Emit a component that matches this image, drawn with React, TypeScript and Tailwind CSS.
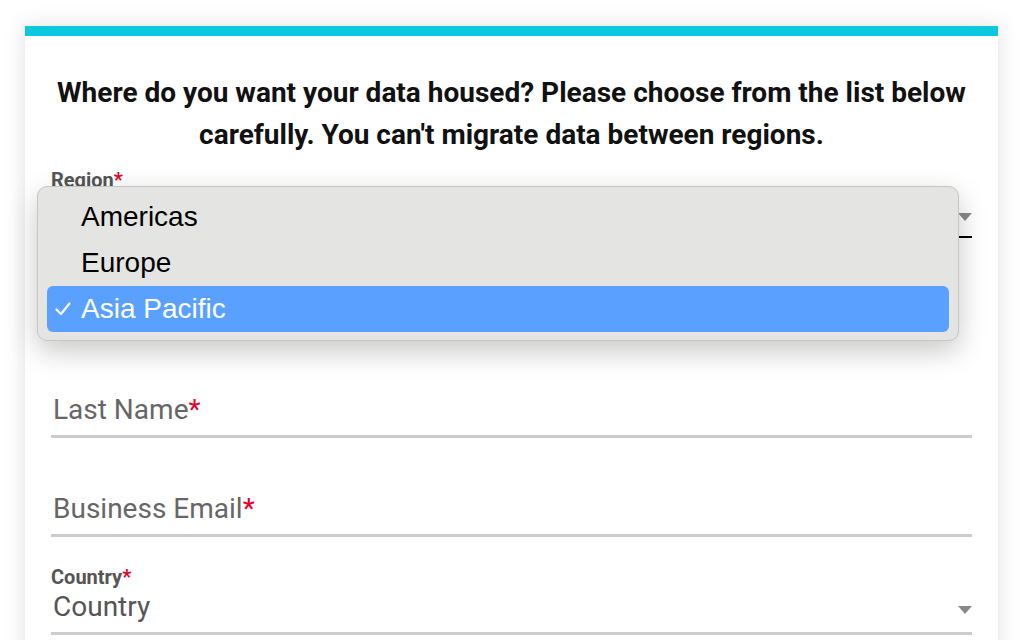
import React from 'react'

const roboto = { fontFamily: 'Roboto, "Noto Sans", sans-serif' }

function Star() {
    return <span className="text-[#e4002b]">*</span>
}

function Arrow({ className }: { className: string }) {
    return (
        <svg width="14" height="8" viewBox="0 0 14 8" className={`absolute right-0 ${className}`}>
            <path d="M0 0 L14 0 L7 8 Z" fill="#8a8a8a" />
        </svg>
    )
}

function TextField({ label }: { label: string }) {
    return (
        <div className="pt-[56px] pb-[10px] border-b-[3px] border-[#cccccc]">
            <div className="h-[30px] leading-[30px] text-[28px] text-[#666666] pl-[2px]">
                {label}
                <Star />
            </div>
        </div>
    )
}

const regions = ['Americas', 'Europe', 'Asia Pacific']

function RegionMenu() {
    return (
        <div
            className="absolute left-[12px] top-[150px] w-[922px] rounded-[10px] border border-[#c6c6c6] bg-[#e4e4e3] pt-[7px] pb-[8px] px-[9px] shadow-[0_10px_28px_rgba(0,0,0,0.22)]"
            style={{ fontFamily: '"Liberation Sans", Arial, sans-serif' }}
        >
            {regions.map((r) => {
                const sel = r === 'Asia Pacific'
                return (
                    <div
                        key={r}
                        className={`relative h-[46px] leading-[46px] pl-[34px] text-[28px] rounded-[6px] ${sel ? 'bg-[#59a0ff] text-white' : 'text-black'}`}
                    >
                        {sel && (
                            <svg width="16" height="14" viewBox="0 0 16 14" className="absolute left-[8px] top-[16px]">
                                <path d="M1.5 7.5 L6 12 L14.5 1.5" fill="none" stroke="white" strokeWidth="2.2" strokeLinecap="round" strokeLinejoin="round" />
                            </svg>
                        )}
                        {r}
                    </div>
                )
            })}
        </div>
    )
}

export default function App() {
    return (
        <div className="h-[640px] bg-white pt-[26px] overflow-hidden" style={roboto}>
            <div className="relative ml-[25px] w-[973px] bg-white border-t-[10px] border-[#0bc8de] shadow-[0_0_22px_rgba(0,0,0,0.12)] pb-[40px]">
                <h1 className="pt-[36px] px-[20px] text-center text-[28px] leading-[42px] font-bold text-[#111111]">
                    Where do you want your data housed? Please choose from the list below carefully. You can't
                    migrate data between regions.
                </h1>

                <div className="px-[26px]">
                    <div className="mt-[14px] h-[20px] leading-[20px] text-[20px] font-bold text-[#555555]">
                        Region
                        <Star />
                    </div>
                    <div className="relative h-[48px] border-b-2 border-black">
                        <Arrow className="top-[23px]" />
                    </div>

                    {/* first name row sits under the open menu */}
                    <div className="h-[101px]" />
                    <TextField label="Last Name" />
                    <TextField label="Business Email" />

                    <div className="mt-[30px] h-[20px] leading-[20px] text-[20px] font-bold text-[#555555]">
                        Country
                        <Star />
                    </div>
                    <div className="relative pt-[5px] pb-[10px] border-b-[3px] border-[#cccccc]">
                        <div className="h-[30px] leading-[30px] text-[28px] text-[#555555] pl-[2px]">Country</div>
                        <Arrow className="top-[19px]" />
                    </div>
                </div>

                <RegionMenu />
            </div>
        </div>
    )
}
